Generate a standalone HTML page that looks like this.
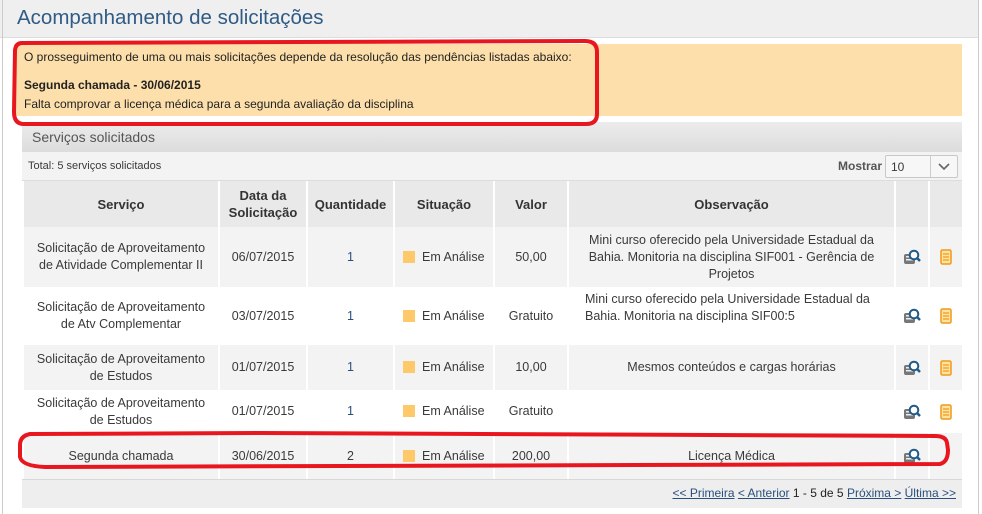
<!DOCTYPE html>
<html><head><meta charset="utf-8"><style>
*{margin:0;padding:0;box-sizing:border-box}
body{width:982px;height:514px;background:#fff;font-family:"Liberation Sans",sans-serif;color:#3a3a3a;position:relative;overflow:hidden;font-size:12.5px}
.abs{position:absolute}
#hdr{left:0;top:0;width:978px;height:38px;background:#efefef;border-bottom:1px solid #ddd}
#hdr span{position:absolute;left:17px;top:6px;font-size:20.5px;color:#2f5b85}
#lb{left:2px;top:0;width:1px;height:514px;background:#ccc}
#rb{left:978px;top:0;width:1px;height:514px;background:#ccc}
#warn{left:14px;top:44px;width:948px;height:72px;background:#fddfab;color:#222;font-size:12px}
#ph{left:22px;top:122px;width:940px;height:30px;background:linear-gradient(#ececec,#dcdcdc);font-size:14px;color:#555;padding:7px 0 0 10px}
#tb{left:22px;top:152px;width:940px;height:29px;background:#f3f3f3;border-bottom:1px solid #ddd;font-size:11px}
table{position:absolute;left:22px;top:181px;width:940px;border-collapse:collapse;table-layout:fixed}
td,th{border-left:2px solid #fff;border-right:2px solid #fff;text-align:center;vertical-align:middle;font-weight:normal;line-height:17px;padding:0 3px}
td:first-child{padding:0 12px}
th{background:#e9e9e9;font-weight:bold;height:46px;color:#333;font-size:13px}
tr.o td{background:#f3f3f3}
tr.e td{background:#fff}
.sq{display:inline-block;width:12px;height:12px;background:#fdc96a;vertical-align:-2px;margin-right:7px}
.sit{text-align:left;padding-left:8px}
#ft{left:22px;top:479px;width:940px;height:29px;background:#eee;border-top:1px solid #d8d8d8;font-size:12px;text-align:right;padding:6px 6px 0 0;color:#222}
#ft a{color:#2a4f7d;text-decoration:underline}
svg.i{vertical-align:middle}
</style></head><body>
<div id="hdr" class="abs"><span>Acompanhamento de solicitações</span></div>
<div id="lb" class="abs"></div><div id="rb" class="abs"></div>
<div id="warn" class="abs">
<div style="position:absolute;left:10px;top:6px">O prosseguimento de uma ou mais solicitações depende da resolução das pendências listadas abaixo:</div>
<div style="position:absolute;left:10px;top:34px;font-weight:bold">Segunda chamada - 30/06/2015</div>
<div style="position:absolute;left:10px;top:53px">Falta comprovar a licença médica para a segunda avaliação da disciplina</div>
</div>
<div id="ph" class="abs">Serviços solicitados</div>
<div id="tb" class="abs"><span style="position:absolute;left:6px;top:8px">Total: 5 serviços solicitados</span>
<span style="position:absolute;left:816px;top:7px;font-weight:bold;color:#555;font-size:12px">Mostrar</span>
<div style="position:absolute;left:863px;top:3px;width:73px;height:23px;border:1px solid #c8c8c8;background:#f7f7f7;border-radius:2px">
<span style="position:absolute;left:5px;top:4px;font-size:12px">10</span>
<div style="position:absolute;left:44px;top:0;width:1px;height:21px;background:#ccc"></div>
<svg style="position:absolute;left:52px;top:7px" width="12" height="8"><path d="M1 1 L6 6 L11 1" stroke="#666" stroke-width="1.6" fill="none"/></svg></div>
</div>
<table>
<colgroup><col style="width:196px"><col style="width:88px"><col style="width:87px"><col style="width:100px"><col style="width:74px"><col style="width:327px"><col style="width:34px"><col style="width:34px"></colgroup>
<tr><th>Serviço</th><th>Data da Solicitação</th><th>Quantidade</th><th>Situação</th><th>Valor</th><th>Observação</th><th></th><th></th></tr>
<tr class="o" style="height:60px"><td>Solicitação de Aproveitamento de Atividade Complementar II</td><td>06/07/2015</td><td style="color:#2a4f7d">1</td><td class="sit"><span class="sq"></span>Em Análise</td><td>50,00</td><td>Mini curso oferecido pela Universidade Estadual da Bahia. Monitoria na disciplina SIF001 - Gerência de Projetos</td><td><svg class="i" width="18" height="16"><rect x="1" y="5" width="11" height="10" rx="2" fill="#777"/><rect x="3" y="7" width="7" height="1.5" fill="#eee"/><rect x="3" y="10" width="7" height="1.5" fill="#eee"/><circle cx="11" cy="6" r="4.3" fill="#fff" stroke="#1f5c8c" stroke-width="2"/><path d="M14 9 L17 12" stroke="#1f5c8c" stroke-width="2.5"/></svg></td><td><svg class="i" width="12" height="16"><rect x="1" y="1" width="10" height="14" rx="1.5" fill="#fde3a8" stroke="#f39a12" stroke-width="1.5"/><path d="M3 5h6M3 8h6M3 11h6" stroke="#f39a12" stroke-width="1.2"/></svg></td></tr>
<tr class="e" style="height:58px"><td>Solicitação de Aproveitamento de Atv Complementar</td><td>03/07/2015</td><td style="color:#2a4f7d">1</td><td class="sit"><span class="sq"></span>Em Análise</td><td>Gratuito</td><td style="text-align:left;padding-left:16px;vertical-align:top;padding-top:4px">Mini curso oferecido pela Universidade Estadual da Bahia. Monitoria na disciplina SIF00:5</td><td><svg class="i" width="18" height="16"><rect x="1" y="5" width="11" height="10" rx="2" fill="#777"/><rect x="3" y="7" width="7" height="1.5" fill="#eee"/><rect x="3" y="10" width="7" height="1.5" fill="#eee"/><circle cx="11" cy="6" r="4.3" fill="#fff" stroke="#1f5c8c" stroke-width="2"/><path d="M14 9 L17 12" stroke="#1f5c8c" stroke-width="2.5"/></svg></td><td><svg class="i" width="12" height="16"><rect x="1" y="1" width="10" height="14" rx="1.5" fill="#fde3a8" stroke="#f39a12" stroke-width="1.5"/><path d="M3 5h6M3 8h6M3 11h6" stroke="#f39a12" stroke-width="1.2"/></svg></td></tr>
<tr class="o" style="height:45px"><td>Solicitação de Aproveitamento de Estudos</td><td>01/07/2015</td><td style="color:#2a4f7d">1</td><td class="sit"><span class="sq"></span>Em Análise</td><td>10,00</td><td>Mesmos conteúdos e cargas horárias</td><td><svg class="i" width="18" height="16"><rect x="1" y="5" width="11" height="10" rx="2" fill="#777"/><rect x="3" y="7" width="7" height="1.5" fill="#eee"/><rect x="3" y="10" width="7" height="1.5" fill="#eee"/><circle cx="11" cy="6" r="4.3" fill="#fff" stroke="#1f5c8c" stroke-width="2"/><path d="M14 9 L17 12" stroke="#1f5c8c" stroke-width="2.5"/></svg></td><td><svg class="i" width="12" height="16"><rect x="1" y="1" width="10" height="14" rx="1.5" fill="#fde3a8" stroke="#f39a12" stroke-width="1.5"/><path d="M3 5h6M3 8h6M3 11h6" stroke="#f39a12" stroke-width="1.2"/></svg></td></tr>
<tr class="e" style="height:43px"><td>Solicitação de Aproveitamento de Estudos</td><td>01/07/2015</td><td style="color:#2a4f7d">1</td><td class="sit"><span class="sq"></span>Em Análise</td><td>Gratuito</td><td></td><td><svg class="i" width="18" height="16"><rect x="1" y="5" width="11" height="10" rx="2" fill="#777"/><rect x="3" y="7" width="7" height="1.5" fill="#eee"/><rect x="3" y="10" width="7" height="1.5" fill="#eee"/><circle cx="11" cy="6" r="4.3" fill="#fff" stroke="#1f5c8c" stroke-width="2"/><path d="M14 9 L17 12" stroke="#1f5c8c" stroke-width="2.5"/></svg></td><td><svg class="i" width="12" height="16"><rect x="1" y="1" width="10" height="14" rx="1.5" fill="#fde3a8" stroke="#f39a12" stroke-width="1.5"/><path d="M3 5h6M3 8h6M3 11h6" stroke="#f39a12" stroke-width="1.2"/></svg></td></tr>
<tr class="o" style="height:46px"><td>Segunda chamada</td><td>30/06/2015</td><td>2</td><td class="sit"><span class="sq"></span>Em Análise</td><td>200,00</td><td>Licença Médica</td><td><svg class="i" width="18" height="16"><rect x="1" y="5" width="11" height="10" rx="2" fill="#777"/><rect x="3" y="7" width="7" height="1.5" fill="#eee"/><rect x="3" y="10" width="7" height="1.5" fill="#eee"/><circle cx="11" cy="6" r="4.3" fill="#fff" stroke="#1f5c8c" stroke-width="2"/><path d="M14 9 L17 12" stroke="#1f5c8c" stroke-width="2.5"/></svg></td><td></td></tr>
</table>
<div id="ft" class="abs"><a>&lt;&lt; Primeira</a> <a>&lt; Anterior</a> 1 - 5 de 5 <a>Próxima &gt;</a> <a>Última &gt;&gt;</a></div>
<svg class="abs" style="left:0;top:0" width="982" height="514">
<path d="M22 43 Q16 43 15 50 L14 112 Q14 124 24 124 L586 124 Q597 124 597 114 L597 52 Q597 41 585 41 Z" stroke="#e8171f" stroke-width="4" fill="none"/>
<path d="M30 434 Q20 436 20 445 L20 457 Q22 466 45 467 L940 464 Q948 462 948 450 L947 443 Q946 436 935 436 L260 433 Z" stroke="#e8171f" stroke-width="4" fill="none"/>
</svg>
</body></html>
